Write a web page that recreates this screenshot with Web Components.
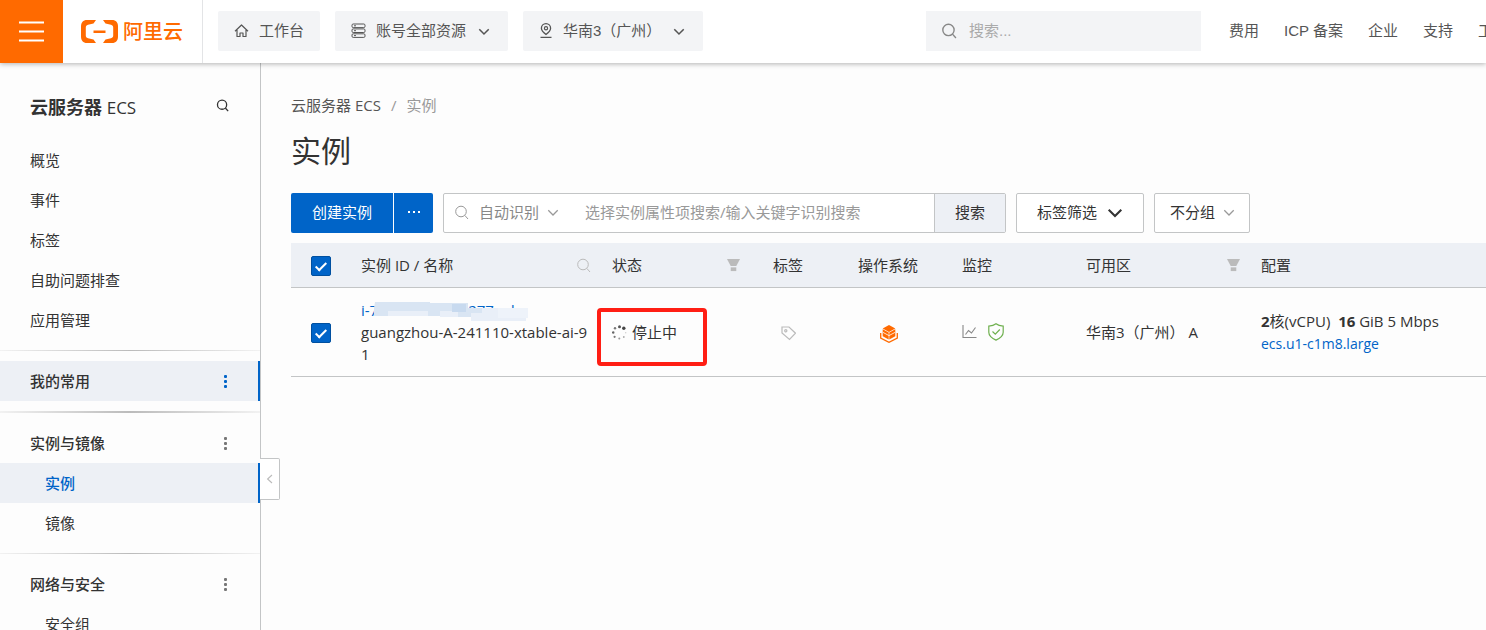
<!DOCTYPE html>
<html lang="zh-CN">
<head>
<meta charset="utf-8">
<meta name="viewport" content="width=device-width, initial-scale=1">
<title>云服务器 ECS - 实例</title>
<style>
    body {
        margin: 0;
        background: #fdfdfd;
        color: #333;
        font: 15px/22px "Open Sans", "Noto Sans CJK SC", sans-serif;
        overflow: hidden;
        --blue: #0064c8;
        --orange: #ff6a00;
        --line: #c3c5c6;
        --tint: #edf0f5;
    }
</style>
</head>
<body>
<ecs-console>
    <ecs-topbar slot="top"></ecs-topbar>
    <ecs-sidebar slot="side">
        <ecs-nav-item>概览</ecs-nav-item>
        <ecs-nav-item>事件</ecs-nav-item>
        <ecs-nav-item>标签</ecs-nav-item>
        <ecs-nav-item>自助问题排查</ecs-nav-item>
        <ecs-nav-item>应用管理</ecs-nav-item>
        <ecs-rule></ecs-rule>
        <ecs-nav-item group active>我的常用</ecs-nav-item>
        <ecs-rule thick></ecs-rule>
        <ecs-nav-item group>实例与镜像</ecs-nav-item>
        <ecs-nav-item sub active>实例</ecs-nav-item>
        <ecs-nav-item sub>镜像</ecs-nav-item>
        <ecs-rule></ecs-rule>
        <ecs-nav-item group>网络与安全</ecs-nav-item>
        <ecs-nav-item sub>安全组</ecs-nav-item>
    </ecs-sidebar>
    <ecs-instances></ecs-instances>
</ecs-console>

<script>
const ICONS = {
    menu: '<path d="M0 1.5h25M0 10.5h25M0 19.5h25" stroke-width="2"/>',
    home: '<path d="M1 8.2L7.5 2 14 8.2M3 7v6.5h3V10h3v3.5h3V7" stroke-linejoin="round"/>',
    stack: '<rect x="1" y="1" width="13" height="3.6" rx="1.2"/><rect x="1" y="5.9" width="13" height="3.6" rx="1.2"/><rect x="1" y="10.8" width="13" height="3.6" rx="1.2"/><path d="M3 2.8h2M3 7.7h2M3 12.6h2"/>',
    pin: '<path d="M7 11.500C4.200 9.400 2.400 7.700 2.400 5.300a4.600 4.600 0 0 1 9.200 0C11.600 7.700 9.800 9.400 7 11.500zM1.500 14.300h11" stroke-width="1.300"/><circle cx="7" cy="5.300" r="1.600" stroke-width="1.200"/>',
    search: '<circle cx="7" cy="6.500" r="5.300"/><path d="M10.800 10.400L14 14"/>',
    down: '<path d="M1.500 5L7 10.500 12.500 5"/>',
    left: '<path d="M10 2.500L4.500 7.500 10 12.500"/>',
    dots: '<g fill="currentColor" stroke="none"><rect x="2" y="1" width="3" height="3" rx="1"/><rect x="2" y="6" width="3" height="3" rx="1"/><rect x="2" y="11" width="3" height="3" rx="1"/></g>',
    more: '<g fill="currentColor" stroke="none"><rect x="0" y="1" width="2" height="2"/><rect x="5" y="1" width="2" height="2"/><rect x="10" y="1" width="2" height="2"/></g>',
    filter: '<g fill="currentColor" stroke="none"><path d="M0 0h14L10 7.500H4z"/><rect x="4" y="9" width="6" height="4"/></g>',
    spinner: '<g fill="#555" stroke="none"><circle cx="7.500" cy="1.700" r="1.500"/><circle cx="11.800" cy="3.300" r="1.700" fill="#444"/><circle cx="3" cy="3.300" r="1.200" fill="#777"/><circle cx="1.200" cy="7.500" r="1.300" fill="#666"/><circle cx="2.600" cy="11.800" r="1.100" fill="#777"/><circle cx="7.300" cy="13.600" r="1" fill="#999"/><circle cx="11.800" cy="12" r=".9" fill="#aaa"/><circle cx="13.700" cy="7.800" r=".7" fill="#ccc"/></g>',
    tag: '<path d="M1 1h7l6.500 6.200-6 6.300L1 7z"/><circle cx="4.800" cy="4.800" r="1.100"/>',
    os: '<g fill="currentColor" stroke="none"><path d="M9 0l6.300 3.500L9 7 2.700 3.500z"/><path d="M2.700 4.300l6 3.300V14.600l-6-3.300zM15.300 4.300l-6 3.300V14.600l6-3.300z"/></g><path d="M3 7.400l6 3.200 6-3.200" stroke="#fff" stroke-width=".8"/><path d="M.7 8v5L9 17.300 17.300 13V8" stroke-width="1.300"/>',
    chart: '<path d="M1 0v12.500h13.500"/><path d="M3.500 9.500l3-4 3 2.500 4-5.500"/>',
    shield: '<path d="M8 .8c2 1.700 4.500 2.300 7.200 2.400v6c0 3.800-3.600 6.200-7.200 7.900C4.400 15.400.8 13 .8 9.200v-6C3.500 3.100 6 2.500 8 .8z"/><path d="M4.500 8.500l2.800 2.700 4.500-4.700"/>',
    logo: '<g fill="currentColor" stroke="none"><path d="M15 0H6C2 0 0 2.500 0 6.500v10C0 20.500 2 23 6 23h9l-2.500-3.400-5.500-1.300c-1.500-.4-2.200-1.300-2.200-2.700V7.400C4.800 6 5.500 5.100 7 4.700l5.500-1.300z"/><path d="M22 0h9c4 0 6 2.500 6 6.500v10c0 4-2 6.500-6 6.500h-9l2.500-3.400 5.500-1.300c1.500-.4 2.200-1.300 2.200-2.700V7.400c0-1.400-.7-2.300-2.200-2.700l-5.500-1.300z"/><rect x="12.500" y="10.500" width="12" height="2.500"/></g>'
};

function define(name, html) {
    const template = document.createElement('template');
    template.innerHTML = html;
    customElements.define(name, class extends HTMLElement {
        constructor() {
            super();
            this.attachShadow({mode: 'open'}).appendChild(template.content.cloneNode(true));
        }
    });
}

// <ecs-icon name="search" box="15 15" weight="1">
customElements.define('ecs-icon', class extends HTMLElement {
    constructor() {
        super();
        this.attachShadow({mode: 'open'});
    }
    connectedCallback() {
        const [w, h] = (this.getAttribute('box') || '15 15').split(' ');
        const size = Number(this.getAttribute('size')) || Number(w);
        this.shadowRoot.innerHTML = `
        <style>
            :host {
                display: inline-flex;
                flex: none;
            }
            svg {
                display: block;
                fill: none;
                stroke: currentColor;
                stroke-width: ${this.getAttribute('weight') || 1};
            }
        </style>
        <svg width="${size}" height="${size * h / w}" viewBox="0 0 ${w} ${h}" aria-hidden="true">${ICONS[this.getAttribute('name')]}</svg>`;
    }
});

define('ecs-console', `
    <style>
        :host {
            display: grid;
            grid-template: auto 1fr / 261px 1fr;
            height: 100vh;
        }
        ::slotted([slot=top]) {
            grid-column: 1 / 3;
        }
        main {
            min-width: 0;
            overflow: hidden;
        }
    </style>
    <slot name="top"></slot>
    <slot name="side"></slot>
    <main><slot></slot></main>`);

define('ecs-topbar', `
    <style>
        :host {
            display: flex;
            align-items: center;
            height: 63px;
            background: #fff;
            box-shadow: 0 1px 5px rgba(0, 0, 0, .3);
            color: #555;
            font-family: "Liberation Sans", "Noto Sans CJK SC", sans-serif;
            position: relative;
            z-index: 2;
        }
        button {
            border: 0;
            font: inherit;
            color: inherit;
        }
        .burger {
            display: flex;
            align-items: center;
            justify-content: center;
            flex: none;
            width: 63px;
            height: 63px;
            padding: 0;
            background: var(--orange);
            color: #fff;
        }
        .brand {
            display: flex;
            align-items: center;
            gap: 5px;
            box-sizing: border-box;
            flex: none;
            width: 140px;
            height: 63px;
            padding-left: 18px;
            border-right: 1px solid #e3e4e6;
            color: var(--orange);
            font-size: 20px;
            font-weight: 500;
            text-decoration: none;
            white-space: nowrap;
        }
        .pickers, .search, nav {
            margin-bottom: 2px;
        }
        .pickers {
            display: flex;
            gap: 15px;
            padding: 0 15px;
        }
        .pickers button {
            display: flex;
            align-items: center;
            gap: 10px;
            height: 40px;
            padding: 0 16px;
            border-radius: 2px;
            background: #f3f4f6;
            white-space: nowrap;
        }
        .pickers button[aria-haspopup] {
            padding-right: 18px;
        }
        .pickers ecs-icon[name=down] {
            margin-left: 2px;
        }
        .search {
            display: flex;
            align-items: center;
            gap: 12px;
            box-sizing: border-box;
            flex: 0 1 275px;
            height: 40px;
            margin-left: auto;
            padding: 0 15px;
            background: #f3f4f6;
            color: #888;
        }
        input {
            flex: 1;
            min-width: 0;
            padding: 0;
            border: 0;
            outline: 0;
            background: none;
            font: inherit;
        }
        input::placeholder {
            color: #aaa;
        }
        nav {
            display: flex;
            gap: 25px;
            flex: 0 0 257px;
            margin-left: 28px;
            overflow: hidden;
            white-space: nowrap;
        }
        nav a {
            color: inherit;
            text-decoration: none;
        }
    </style>
    <button class="burger" aria-label="菜单"><ecs-icon name="menu" box="25 21"></ecs-icon></button>
    <a class="brand" href="#"><ecs-icon name="logo" box="37 23"></ecs-icon>阿里云</a>
    <div class="pickers">
        <button><ecs-icon name="home" weight="1.2"></ecs-icon>工作台</button>
        <button aria-haspopup="true"><ecs-icon name="stack"></ecs-icon>账号全部资源<ecs-icon name="down" weight="1.8" box="14 14" size="12"></ecs-icon></button>
        <button aria-haspopup="true"><ecs-icon name="pin" box="14 15"></ecs-icon>华南3（广州）<ecs-icon name="down" weight="1.8" box="14 14" size="12"></ecs-icon></button>
    </div>
    <label class="search" aria-label="搜索"><ecs-icon name="search" size="16" weight="1.3"></ecs-icon><input type="text" placeholder="搜索..."></label>
    <nav>
        <a href="#">费用</a>
        <a href="#">ICP 备案</a>
        <a href="#">企业</a>
        <a href="#">支持</a>
        <a href="#">工单</a>
    </nav>`);

define('ecs-rule', `
    <style>
        :host {
            display: block;
            height: 1px;
            margin: 10px 0;
            background: linear-gradient(90deg, #f2f2f2, #bbb 50%, #f2f2f2);
        }
        :host([thick]) {
            height: 2px;
        }
    </style>`);

define('ecs-nav-item', `
    <style>
        :host {
            display: block;
        }
        a {
            display: flex;
            align-items: center;
            justify-content: space-between;
            box-sizing: border-box;
            height: 40px;
            padding: 0 29px 0 30px;
            border-right: 2px solid transparent;
            color: #333;
            text-decoration: none;
        }
        ecs-icon {
            display: none;
            color: #777;
        }
        :host([group]) a {
            font-weight: 500;
        }
        :host([group]) ecs-icon {
            display: inline-flex;
        }
        :host([sub]) a {
            padding-left: 45px;
        }
        :host([active]) a {
            background: var(--tint);
            border-color: var(--blue);
        }
        :host([active]) ecs-icon {
            color: var(--blue);
        }
        :host([sub][active]) a {
            color: var(--blue);
            font-weight: 500;
        }
    </style>
    <a href="#"><slot></slot><ecs-icon name="dots" box="7 15"></ecs-icon></a>`);

define('ecs-sidebar', `
    <style>
        :host {
            display: block;
            position: relative;
            min-height: 0;
            border-right: 1px solid var(--line);
        }
        nav {
            height: 100%;
            overflow: hidden;
        }
        header {
            display: flex;
            align-items: center;
            justify-content: space-between;
            padding: 32px 31px 20px 30px;
            line-height: 25px;
        }
        h2 {
            margin: 0;
            font-size: 18px;
            font-weight: 700;
        }
        h2 span {
            font-size: 17px;
            font-weight: 500;
        }
        header button {
            display: flex;
            padding: 0 0 4px;
            border: 0;
            background: none;
            color: #333;
        }
        .fold {
            display: flex;
            align-items: center;
            justify-content: center;
            position: absolute;
            top: 395px;
            right: -20px;
            width: 20px;
            height: 42px;
            padding: 0;
            border: 1px solid var(--line);
            border-left: 0;
            border-radius: 0 2px 2px 0;
            background: #fff;
            color: #bbb;
            z-index: 1;
        }
    </style>
    <nav>
        <header>
            <h2>云服务器 <span>ECS</span></h2>
            <button aria-label="搜索"><ecs-icon name="search" size="13" weight="1.5"></ecs-icon></button>
        </header>
        <slot></slot>
    </nav>
    <button class="fold" aria-label="收起"><ecs-icon name="left" size="12" weight="1.4"></ecs-icon></button>`);

define('ecs-toolbar', `
    <style>
        :host {
            display: flex;
            gap: 10px;
            height: 40px;
        }
        button, select, input {
            box-sizing: border-box;
            margin: 0;
            border: 1px solid var(--line);
            border-radius: 2px;
            background: #fff;
            color: #333;
            font: inherit;
            white-space: nowrap;
        }
        .create {
            display: flex;
            gap: 1px;
        }
        .create button {
            border: 0;
            border-radius: 2px 0 0 2px;
            padding: 0 21px 2px;
            background: var(--blue);
            color: #fff;
        }
        .create button + button {
            display: flex;
            align-items: center;
            justify-content: center;
            border-radius: 0 2px 2px 0;
            padding: 0 0 2px;
            width: 39px;
        }
        .finder {
            display: flex;
            flex: 0 1 563px;
            min-width: 0;
            box-sizing: border-box;
            border: 1px solid var(--line);
            border-radius: 2px;
            background: #fff;
            color: #999;
        }
        .finder > ecs-icon {
            align-self: center;
            margin: 0 10px;
            padding-bottom: 2px;
        }
        .finder input, .finder select, .finder button {
            border: 0;
        }
        .finder input {
            flex: 1;
            min-width: 0;
            padding: 0 0 2px 10px;
            outline: 0;
        }
        .finder input::placeholder {
            color: #999;
        }
        .finder button {
            width: 71px;
            padding: 0 0 2px;
            border-left: 1px solid var(--line);
            border-radius: 0;
            background: var(--tint);
        }
        .pick {
            display: grid;
            align-items: center;
        }
        .pick > * {
            grid-area: 1 / 1;
        }
        .pick select {
            appearance: none;
            height: 100%;
            width: 96px;
            padding: 0 0 2px 15px;
        }
        .finder .pick select {
            padding: 0 0 2px;
            color: #888;
        }
        .pick ecs-icon {
            justify-self: end;
            margin-right: 15px;
            padding-bottom: 2px;
            color: #999;
            pointer-events: none;
        }
        .finder .pick ecs-icon {
            margin-right: 16px;
        }
        .tags {
            display: flex;
            align-items: center;
            gap: 10px;
            padding: 0 20px 2px;
        }
    </style>
    <div class="create">
        <button>创建实例</button>
        <button aria-label="更多"><ecs-icon name="more" box="12 4"></ecs-icon></button>
    </div>
    <div class="finder">
        <ecs-icon name="search"></ecs-icon>
        <div class="pick">
            <select aria-label="识别方式"><option>自动识别</option></select>
            <ecs-icon name="down" box="14 14" size="12" weight="1.5"></ecs-icon>
        </div>
        <input type="text" aria-label="搜索实例" placeholder="选择实例属性项搜索/输入关键字识别搜索">
        <button>搜索</button>
    </div>
    <button class="tags" aria-haspopup="true">标签筛选<ecs-icon name="down" box="14 14" size="16" weight="1.8"></ecs-icon></button>
    <div class="pick">
        <select aria-label="分组"><option>不分组</option></select>
        <ecs-icon name="down" box="14 14" size="12" weight="1.5"></ecs-icon>
    </div>`);

define('ecs-table', `
    <style>
        :host {
            display: block;
        }
        table {
            width: 100%;
            table-layout: fixed;
            border-collapse: separate;
            border-spacing: 0;
        }
        th, td {
            padding: 11px 15px;
            border-bottom: 1px solid var(--line);
            font-weight: 400;
            text-align: left;
        }
        th {
            background: var(--tint);
            white-space: nowrap;
        }
        th:nth-child(2), td:nth-child(2) {
            padding-right: 6px;
        }
        th:nth-child(3) {
            padding-right: 18px;
        }
        th:nth-child(7) {
            padding-right: 6px;
        }
        th div {
            display: flex;
            align-items: center;
            justify-content: space-between;
        }
        th ecs-icon {
            color: #bbb;
        }
        th:first-child, td:first-child {
            padding: 2px 0 0 20px;
        }
        input {
            display: grid;
            place-items: center;
            appearance: none;
            width: 20px;
            height: 20px;
            margin: 0;
            border: 1px solid #0050a0;
            border-radius: 2px;
            background: var(--blue);
        }
        input::after {
            content: "";
            width: 4px;
            height: 9px;
            border: solid #fff;
            border-width: 0 2px 2px 0;
            transform: translateY(-1px) rotate(45deg);
        }
        td a {
            color: var(--blue);
            text-decoration: none;
        }
        .name {
            word-break: break-all;
        }
        .type {
            font-size: 14px;
        }
        .id {
            display: flex;
            position: relative;
        }
        .id .tail {
            margin-left: 90px;
        }
        .id svg {
            position: absolute;
            left: 11px;
            top: 3px;
        }
        .status {
            position: relative;
        }
        .row {
            display: flex;
            align-items: center;
            gap: 5px;
        }
        .mark {
            position: absolute;
            left: 0;
            top: 20px;
            width: 102px;
            height: 50px;
            border: 4px solid #ff1e14;
            border-radius: 4px;
            pointer-events: none;
        }
        td ecs-icon {
            vertical-align: middle;
        }
        .tag {
            padding-left: 23px;
            color: #bbb;
        }
        .os {
            padding-left: 37px;
            color: var(--orange);
        }
        .monitor {
            gap: 11px;
            color: #888;
        }
        .monitor ecs-icon:last-child {
            color: #6fb04f;
        }
    </style>
    <table>
        <colgroup>
            <col width="55"><col width="251"><col width="161"><col width="85"><col width="104"><col width="124"><col width="175"><col>
        </colgroup>
        <thead>
            <tr>
                <th><input type="checkbox" aria-label="全选" checked></th>
                <th><div>实例 ID / 名称<ecs-icon name="search"></ecs-icon></div></th>
                <th><div>状态<ecs-icon name="filter" box="14 14" size="13"></ecs-icon></div></th>
                <th>标签</th>
                <th>操作系统</th>
                <th>监控</th>
                <th><div>可用区<ecs-icon name="filter" box="14 14" size="13"></ecs-icon></div></th>
                <th>配置</th>
            </tr>
        </thead>
        <tbody>
            <tr>
                <td><input type="checkbox" aria-label="选择实例" checked></td>
                <td class="name">
                    <a class="id" href="#">i-7<span class="tail">277wd</span>
                        <svg width="156" height="20" viewBox="0 0 156 20"><path fill="#d9e5f3" d="M3 0h55v1h38v5h58v12h-55v-3H70v-1H2V6z"/><path fill="#e9eff8" d="M16 9h40v5H16zM68 9h18v6H68zM110 6h44v13H99v-8h11z"/><path fill="#c8daef" d="M80 2h14v8H80z"/><path fill="#eef3fa" d="M126 6h30v10h-30z"/></svg>
                    </a>
                    guangzhou-A-241110-xtable-ai-91
                </td>
                <td class="status"><div class="row"><ecs-icon name="spinner"></ecs-icon>停止中</div><div class="mark"></div></td>
                <td class="tag"><ecs-icon name="tag" weight="1.2"></ecs-icon></td>
                <td class="os"><ecs-icon name="os" box="18 18"></ecs-icon></td>
                <td><div class="row monitor"><ecs-icon name="chart" box="15 14" weight="1.1"></ecs-icon><ecs-icon name="shield" box="16 18" weight="1.2"></ecs-icon></div></td>
                <td>华南3（广州） A</td>
                <td><b>2</b>核(vCPU) &nbsp;<b>16</b> GiB 5 Mbps<br><a class="type" href="#">ecs.u1-c1m8.large</a></td>
            </tr>
        </tbody>
    </table>`);

define('ecs-instances', `
    <style>
        :host {
            display: block;
            padding: 31px 0 0 30px;
        }
        .crumbs {
            display: flex;
            gap: 10px;
            color: #999;
        }
        .crumbs a {
            color: #555;
            text-decoration: none;
        }
        h1 {
            margin: 15px 0 22px;
            font-size: 30px;
            font-weight: 400;
            line-height: 40px;
        }
        ecs-toolbar {
            margin-bottom: 10px;
        }
    </style>
    <nav class="crumbs"><a href="#">云服务器 ECS</a><span>/</span><span>实例</span></nav>
    <h1>实例</h1>
    <ecs-toolbar></ecs-toolbar>
    <ecs-table></ecs-table>`);
</script>
</body>
</html>
